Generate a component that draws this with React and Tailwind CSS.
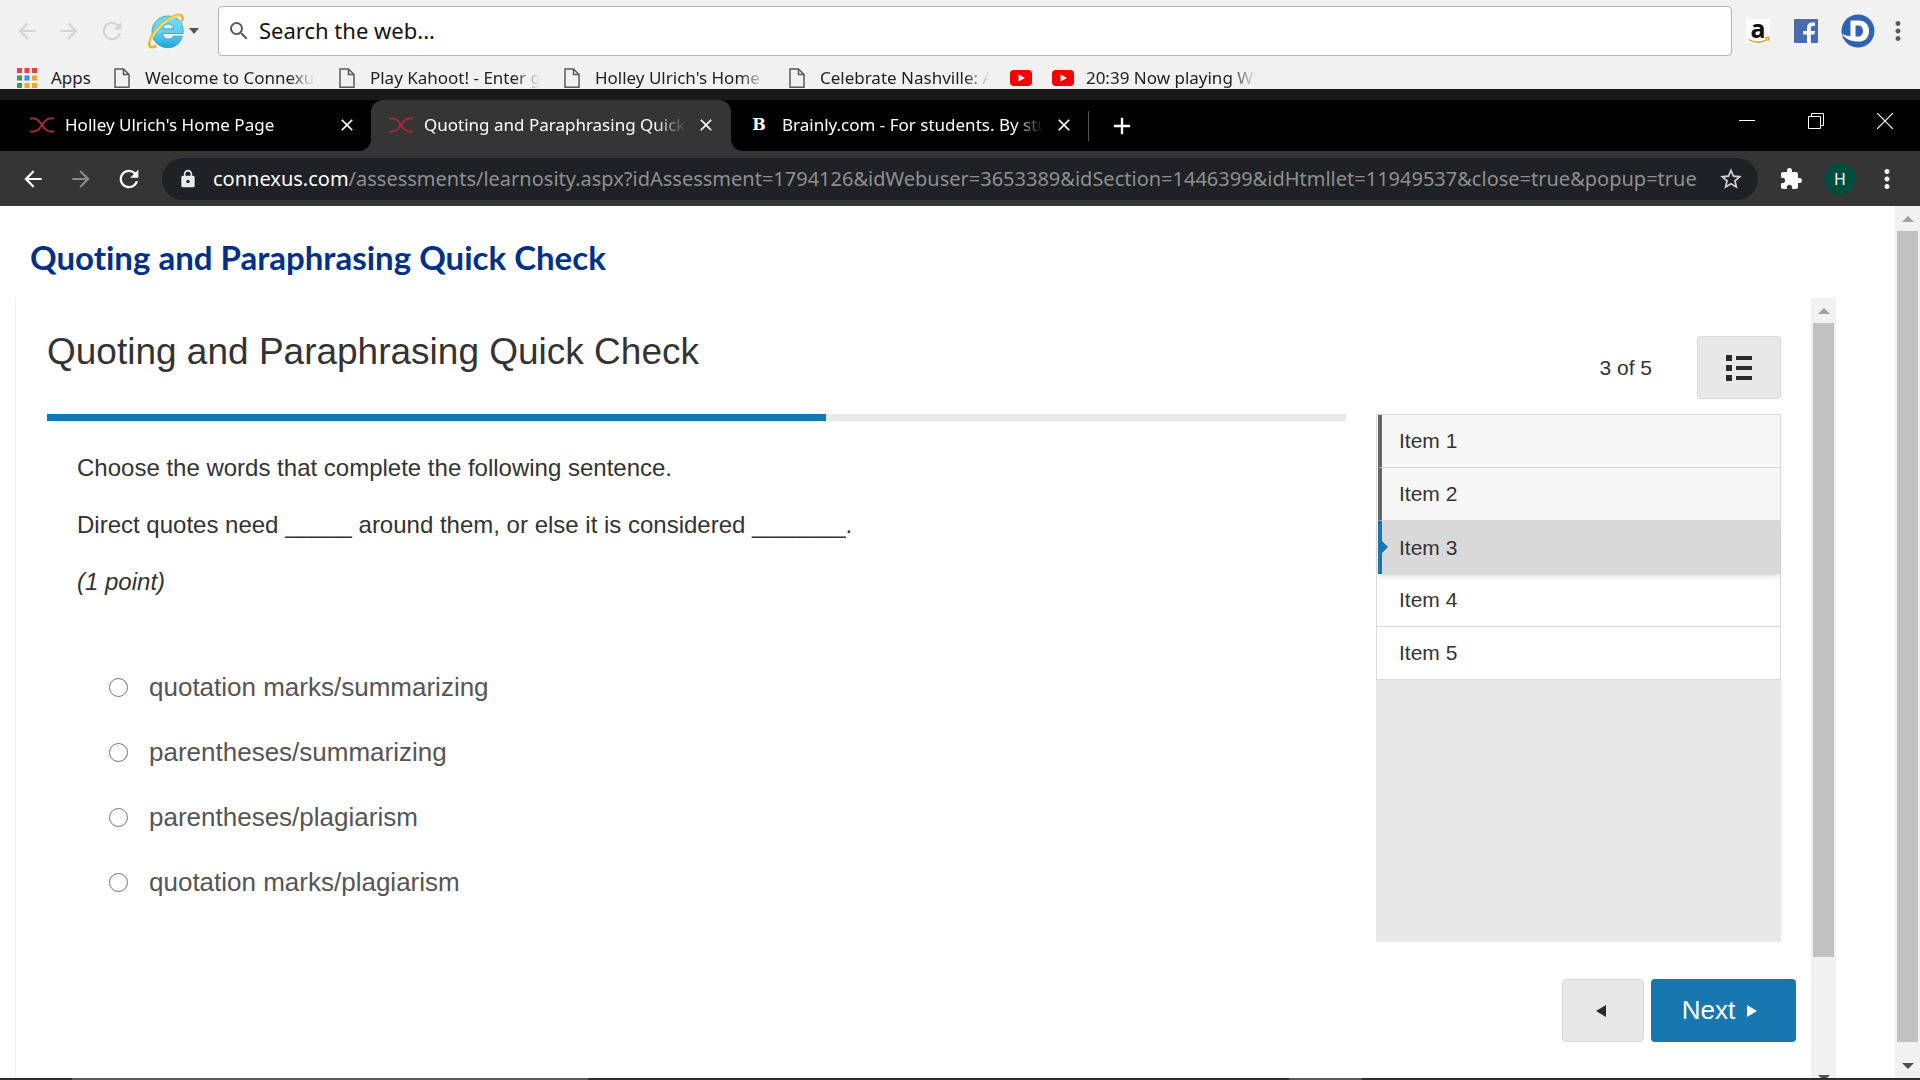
import { useState } from 'react'
import { MdArrowBack, MdArrowForward, MdRefresh, MdLock, MdStarBorder, MdExtension, MdMoreVert, MdClose, MdAdd, MdSearch } from 'react-icons/md'

const bookmarks = ['Welcome to Connexus', 'Play Kahoot! - Enter game', "Holley Ulrich's Home Page", 'Celebrate Nashville: A guide']

const tabs = [
  { title: "Holley Ulrich's Home Page", icon: 'connexus' },
  { title: 'Quoting and Paraphrasing Quick Check', icon: 'connexus', active: true },
  { title: 'Brainly.com - For students. By students.', icon: 'brainly' },
]

const items = ['Item 1', 'Item 2', 'Item 3', 'Item 4', 'Item 5']
const current = 2

const options = [
  'quotation marks/summarizing',
  'parentheses/summarizing',
  'parentheses/plagiarism',
  'quotation marks/plagiarism',
]

const appColors = ['#e0443e', '#e0443e', '#e0443e', '#3d9a50', '#4285f4', '#eca62c', '#3d9a50', '#eca62c', '#eca62c']

function AppsIcon() {
  return (
    <svg className="w-5 h-5 shrink-0" viewBox="0 0 20 20">
      {appColors.map((c, i) => (
        <rect key={i} x={(i % 3) * 7.5} y={Math.floor(i / 3) * 7.5} width="5" height="5" fill={c} />
      ))}
    </svg>
  )
}

function PageIcon() {
  return (
    <svg className="w-4 h-5 shrink-0" viewBox="0 0 16 20" fill="none" stroke="#5a5a5a" strokeWidth="1.5">
      <path d="M1 1h8.5L15 6.5V19.3H1z M9.5 1v5.5H15" />
    </svg>
  )
}

function YoutubeIcon() {
  return (
    <svg className="w-[22px] h-4 shrink-0" viewBox="0 0 22 16">
      <rect width="22" height="16" rx="4" fill="#f80000" />
      <path d="M8.5 4.5l6.5 3.5-6.5 3.5z" fill="#fff" />
    </svg>
  )
}

function ExplorerIcon() {
  return (
    <svg className="w-9 h-9" viewBox="0 0 36 36" fill="none">
      <defs>
        <linearGradient id="ie" x1="0" y1="0" x2="0" y2="1">
          <stop offset="0" stopColor="#6fdcf8" />
          <stop offset="0.5" stopColor="#5fd2f2" />
          <stop offset="1" stopColor="#22a5d6" />
        </linearGradient>
      </defs>
      <path
        d="M35 20.5H14.5c.4 3.6 2.6 5.6 5.8 5.6 2.3 0 4-1 5-2.9h9C32.3 30.500 27 34.700 20 34.700 10.900 34.700 4 28 4 19S11 3 20 3c9.200 0 15.200 6.500 15.200 15.500zM14.600 15.800h11.200c-.4-3-2.600-4.800-5.600-4.800s-5.200 1.800-5.600 4.800z"
        fill="url(#ie)" stroke="#2a9cc4" strokeWidth="0.8"
      />
      <path d="M34 7.500C36 3 33 .8 27.500 2.500 17 6 4 19.500 1.500 29c-1.200 4.800 1.500 6.300 6 4.300" stroke="#e8b52a" strokeWidth="2.600" strokeLinecap="round" />
      <path d="M32 2.600C20 3.500 5 18 2.500 29.500" stroke="#ffdf6a" strokeWidth="1.600" />
    </svg>
  )
}

function ConnexusIcon() {
  return (
    <svg className="w-[26px] h-4 shrink-0" viewBox="0 0 26 16" fill="none" stroke="#a32a36" strokeWidth="2">
      <path d="M1 1.500h4c4 0 5.500 3 8 6.500s4 6.500 8 6.500h4" />
      <path d="M1 14.500h4c4 0 5.500-3 8-6.500s4-6.500 8-6.500h4" />
    </svg>
  )
}

function BrainlyIcon() {
  return <span className="w-[26px] shrink-0 text-center text-white text-base font-bold font-['DejaVu_Serif',serif]">B</span>
}

function DictionaryIcon() {
  return (
    <svg className="w-[34px] h-[34px]" viewBox="0 0 34 34">
      <circle cx="17" cy="17" r="16.5" fill="#2f62b5" />
      <path d="M9.500 6.500h8c7 0 10.500 4.300 10.500 10.500S24.500 27.600 17.500 27.600C10 27.600 3.500 25 .9 19.500c3 1.900 6 2.700 8.600 2.800z" fill="#fff" />
      <path d="M14.500 11.500h2.500c3 0 5 2 5 5.500s-2 5.500-5 5.500h-2.500z" fill="#2f62b5" />
    </svg>
  )
}

function Scrollbar({ className = '', thumb }) {
  return (
    <div className={`w-[25px] shrink-0 bg-[#f1f1f1] flex flex-col items-center ${className}`}>
      <svg className="w-3 h-[25px] shrink-0" viewBox="0 0 12 25"><path d="M0 16l6-6 6 6z" fill="#a0a0a0" /></svg>
      <div className={`w-[21px] shrink-0 bg-[#c1c1c1] ${thumb}`} />
      <div className="flex-1" />
      <svg className="w-3 h-[25px] shrink-0" viewBox="0 0 12 25"><path d="M0 10l6 6 6-6z" fill="#505050" /></svg>
    </div>
  )
}

function SearchBar() {
  return (
    <div className="bg-[#f1f1f1] h-[89px] shrink-0 font-['Noto_Sans',sans-serif]">
      <div className="flex items-center pt-[6px] pl-[14px] pr-[7px]">
        <button aria-label="Back"><MdArrowBack className="w-[26px] h-[26px] text-[#d4d4d4]" /></button>
        <button aria-label="Forward" className="ml-4"><MdArrowForward className="w-[26px] h-[26px] text-[#d4d4d4]" /></button>
        <button aria-label="Reload" className="ml-4"><MdRefresh className="w-[28px] h-[28px] text-[#d4d4d4]" /></button>
        <button aria-label="Browser" className="ml-[22px] flex items-center gap-[5px]">
          <ExplorerIcon />
          <svg className="w-[10px] h-[6px]" viewBox="0 0 10 6"><path d="M0 0h10L5 6z" fill="#555" /></svg>
        </button>
        <label className="ml-[19px] flex-1 h-[50px] bg-white border border-[#b4b4b4] rounded flex items-center pl-2">
          <MdSearch className="w-6 h-6 text-[#5a5a5a]" />
          <input aria-label="Search" placeholder="Search the web..." className="flex-1 ml-2 pb-[2px] text-[22px] outline-none placeholder:text-[#111]" />
        </label>
        <a href="#amazon" aria-label="Amazon" className="ml-[14px] w-6 h-6 bg-white">
          <svg className="w-6 h-6 overflow-visible" viewBox="0 0 24 24">
            <text x="12" y="19" textAnchor="middle" fontSize="25" fontWeight="bold" fontFamily="Open Sans" fill="#111">a</text>
            <path d="M2.500 20.500c6 3.500 13 3.500 18.500 0M19 19l4-.6-1 3.500" fill="none" stroke="#e8951c" strokeWidth="1.400" />
          </svg>
        </a>
        <a href="#facebook" aria-label="Facebook" className="ml-6">
          <svg className="w-6 h-6" viewBox="0 0 24 24">
            <rect width="24" height="24" rx="1" fill="#4a6bb0" />
            <path d="M13 24v-8.500H9.200V12H13V9c0-3.700 2-5.500 5.300-5.500H21V7h-2c-1.600 0-2.200.8-2.200 2.200V12H21l-.6 3.500h-3.600V24z" fill="#fff" />
          </svg>
        </a>
        <a href="#dictionary" aria-label="Dictionary" className="ml-[23px]"><DictionaryIcon /></a>
        <button aria-label="Menu" className="ml-2"><MdMoreVert className="w-[30px] h-[30px] text-[#5a5a5a]" /></button>
      </div>
      <div className="flex items-center h-[22px] mt-[11px] pl-[17px] text-[17px] leading-[22px] text-[#222]">
        <AppsIcon />
        <a href="#apps" className="ml-[14px] mr-[-1px]">Apps</a>
        {bookmarks.map((name) => (
          <a key={name} href="#bookmark" className="flex items-center w-[201px] ml-6">
            <PageIcon />
            <span className="ml-[15px] w-[170px] overflow-hidden whitespace-nowrap mask-r-from-85%">{name}</span>
          </a>
        ))}
        <a href="#video" aria-label="Video" className="ml-5"><YoutubeIcon /></a>
        <a href="#playing" className="flex items-center ml-5">
          <YoutubeIcon />
          <span className="ml-3 w-[170px] overflow-hidden whitespace-nowrap mask-r-from-85%">20:39 Now playing WSM</span>
        </a>
      </div>
    </div>
  )
}

function Tab({ tab, className }) {
  return (
    <div className={`flex items-center pb-[2px] ${className}`}>
      {tab.icon === 'connexus' ? <ConnexusIcon /> : <BrainlyIcon />}
      <span className="ml-[10px] w-[262px] overflow-hidden whitespace-nowrap text-[17px] mask-r-from-88%">{tab.title}</span>
      <button aria-label={`Close ${tab.title}`} className="ml-[10px]"><MdClose className="w-5 h-5" /></button>
    </div>
  )
}

function TabStrip() {
  return (
    <div className="bg-[#353535] h-[51px] shrink-0 flex items-stretch text-white font-['Noto_Sans',sans-serif]">
      <Tab tab={tabs[0]} className="w-[371px] pl-[29px] bg-black rounded-br-xl" />
      <div className="bg-linear-to-b from-black from-50% to-[#353535] to-50%">
        <Tab tab={tabs[1]} className="w-[360px] h-full pl-[17px] bg-[#353535] rounded-t-xl" />
      </div>
      <div className="flex-1 flex items-center bg-black rounded-bl-xl">
        <Tab tab={tabs[2]} className="w-[357px] pl-[15px]" />
        <div className="w-px h-[30px] bg-[#555]" />
        <button aria-label="New tab" className="ml-[19px]"><MdAdd className="w-7 h-7" /></button>
        <div className="flex-1" />
        <div className="flex items-center gap-[53px] pr-[27px] pb-[10px]">
          <button aria-label="Minimize">
            <svg className="w-4 h-4" viewBox="0 0 16 16" stroke="#fff"><path d="M0 7.500h16" /></svg>
          </button>
          <button aria-label="Restore">
            <svg className="w-4 h-4" viewBox="0 0 16 16" fill="none" stroke="#fff"><path d="M.5 3.500h12v12H.5zM3.500 3.500v-3h12v12h-3" /></svg>
          </button>
          <button aria-label="Close">
            <svg className="w-4 h-4" viewBox="0 0 16 16" stroke="#fff" strokeWidth="1.200"><path d="M0 0l16 16M16 0L0 16" /></svg>
          </button>
        </div>
      </div>
    </div>
  )
}

function AddressBar() {
  return (
    <div className="bg-[#353535] h-[55px] shrink-0 flex items-center text-white font-['Noto_Sans',sans-serif]">
      <button aria-label="Back" className="ml-5"><MdArrowBack className="w-[26px] h-[26px]" /></button>
      <button aria-label="Forward" className="ml-[22px]"><MdArrowForward className="w-[26px] h-[26px] text-[#8a8a8a]" /></button>
      <button aria-label="Reload" className="ml-[21px]"><MdRefresh className="w-[28px] h-[28px]" /></button>
      <div className="ml-[19px] flex-1 min-w-0 h-[42px] rounded-full bg-[#202124] flex items-center pl-4 pr-[14px]">
        <MdLock className="w-5 h-5 shrink-0 text-[#e8eaed]" />
        <p className="ml-[15px] flex-1 min-w-0 whitespace-nowrap text-xl text-[#8d9094]">
          <span className="text-white">connexus.com</span>
          /assessments/learnosity.aspx?idAssessment=1794126&idWebuser=3653389&idSection=1446399&idHtmllet=11949537&close=true&popup=true
        </p>
        <button aria-label="Bookmark this page"><MdStarBorder className="w-[26px] h-[26px] text-[#d0d0d0]" /></button>
      </div>
      <button aria-label="Extensions" className="ml-[21px]"><MdExtension className="w-6 h-6" /></button>
      <button aria-label="Profile" className="ml-[21px] w-8 h-8 rounded-full bg-[#004d40] text-base">H</button>
      <button aria-label="Menu" className="ml-4 mr-[18px]"><MdMoreVert className="w-[30px] h-[30px]" /></button>
    </div>
  )
}

function ItemList() {
  return (
    <nav className="h-[528px] bg-[#e8e8e8]">
      <ol className="border border-b-0 border-[#d9d9d9] bg-white">
        {items.map((item, i) => (
          <li
            key={item}
            className={
              i === current
                ? 'relative ml-px border-l-4 border-[#1877b1] bg-[#d9d9d9] shadow-md h-[53px]'
                : i < current
                  ? 'ml-px border-l-4 border-l-[#666] border-b border-b-[#d9d9d9] bg-[#f7f7f7] h-[53px]'
                  : 'border-b border-[#d9d9d9] h-[53px] pl-[5px]'
            }
          >
            {i === current && (
              <svg className="absolute left-0 top-5 w-[6px] h-3" viewBox="0 0 6 12"><path d="M0 0l6 6-6 6z" fill="#1877b1" /></svg>
            )}
            <a href={`#item-${i + 1}`} className="flex items-center h-full pl-[17px]">{item}</a>
          </li>
        ))}
      </ol>
    </nav>
  )
}

function Assessment() {
  const [answer, setAnswer] = useState(null)

  return (
    <div className="flex-1 min-w-0 border-l border-[#f0f0f0] pl-[31px] pr-[15px] text-[#333] font-['Liberation_Sans',sans-serif]">
      <div className="flex justify-between pt-[30px] pr-[15px] h-[116px]">
        <h2 className="text-[37px] leading-[48px]">Quoting and Paraphrasing Quick Check</h2>
        <div className="flex items-center gap-[45px] h-[63px] mt-2 text-[21px]">
          <span>3 of 5</span>
          <button aria-label="Item list" className="w-[84px] h-[63px] bg-[#e8e8e8] border border-[#d9d9d9] rounded-sm flex items-center justify-center">
            <svg className="w-[26px] h-[26px]" viewBox="0 0 26 26" fill="#2b2b2b">
              <path d="M0 0h6v6H0zM0 10h6v6H0zM0 20h6v6H0zM10 1h16v4H10zM10 11h16v4H10zM10 21h16v4H10z" />
            </svg>
          </button>
        </div>
      </div>
      <div className="flex gap-[30px] pr-[15px]">
        <div className="flex-1 min-w-0">
          <div className="h-[7px] bg-[#e8e8e8]">
            <div className="h-full w-3/5 bg-[#1877b1]" />
          </div>
          <div className="pl-[30px] pt-[29px] text-2xl leading-9">
            <p className="mb-[21px]">Choose the words that complete the following sentence.</p>
            <p className="mb-[21px]">Direct quotes need _____ around them, or else it is considered _______.</p>
            <p className="italic">(1 point)</p>
          </div>
          <div className="pl-[62px] pt-[55px] text-[26px] text-[#555]">
            {options.map((option) => (
              <label key={option} className="flex items-center gap-[21px] h-[65px]">
                <input
                  type="radio"
                  name="answer"
                  checked={answer === option}
                  onChange={() => setAnswer(option)}
                  className="appearance-none w-[19px] h-[19px] rounded-full border border-[#767676] bg-white checked:border-[6px] checked:border-[#1877b1]"
                />
                {option}
              </label>
            ))}
          </div>
        </div>
        <div className="w-[405px] shrink-0 text-[21px]">
          <ItemList />
        </div>
      </div>
      <div className="flex justify-end gap-[7px] mt-[37px] h-[63px]">
        <button aria-label="Previous" className="w-[82px] pr-1 bg-[#e8e8e8] border border-[#d9d9d9] rounded-sm flex items-center justify-center">
          <svg className="w-[10px] h-3" viewBox="0 0 10 12"><path d="M10 0v12L0 6z" fill="#2b2b2b" /></svg>
        </button>
        <button className="w-[145px] pr-2 bg-[#1877b1] rounded-sm text-white text-[26px] flex items-center justify-center gap-3">
          Next
          <svg className="w-[10px] h-3" viewBox="0 0 10 12"><path d="M0 0v12l10-6z" fill="#fff" /></svg>
        </button>
      </div>
    </div>
  )
}

export default function App() {
  return (
    <div className="h-screen flex flex-col overflow-hidden bg-white">
      <SearchBar />
      <div className="h-[11px] shrink-0 bg-[#191919]" />
      <TabStrip />
      <AddressBar />
      <div className="flex-1 min-h-0 flex overflow-hidden">
        <main className="flex-1 min-w-0 flex flex-col">
          <h1 className="shrink-0 h-[92px] pt-[31px] pl-[30px] text-[33px] leading-10 font-bold text-[#003087] font-['Lato',sans-serif] [font-variant-ligatures:none]">
            Quoting and Paraphrasing Quick Check
          </h1>
          <div className="flex-1 min-h-0 flex ml-[15px] mr-[59px]">
            <Assessment />
            <Scrollbar className="-mb-3" thumb="h-4/5" />
          </div>
        </main>
        <Scrollbar thumb="h-[93%]" />
      </div>
      {/* top edge of the taskbar */}
      <div className="h-[2px] shrink-0 bg-[#2f2d2e] flex">
        <div className="ml-[72px] w-[516px] bg-[#5a5758]" />
        <div className="ml-[701px] w-[73px] bg-[#5a5758]" />
      </div>
    </div>
  )
}
